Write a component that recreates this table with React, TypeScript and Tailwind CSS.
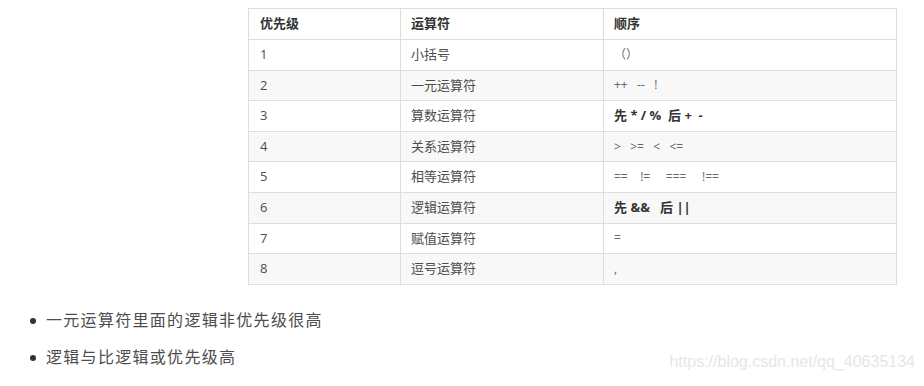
const rows: { level: string; name: string; order: string; bold?: boolean }[] = [
  { level: '1', name: '小括号', order: '（）' },
  { level: '2', name: '一元运算符', order: '++   --   !' },
  { level: '3', name: '算数运算符', order: '先 * / %  后 +  -', bold: true },
  { level: '4', name: '关系运算符', order: '>   >=   <   <=' },
  { level: '5', name: '相等运算符', order: '==    !=     ===     !==' },
  { level: '6', name: '逻辑运算符', order: '先 &&   后 ||', bold: true },
  { level: '7', name: '赋值运算符', order: '=' },
  { level: '8', name: '逗号运算符', order: ',' },
];

const font = { fontFamily: '"Open Sans", "Noto Sans CJK SC", sans-serif' };

const App = () => {
  return (
    <div className="w-[924px] h-[386px] bg-white overflow-hidden text-[#4d4d4d]" style={font}>
      <div className="pt-[8px] pl-[248px]">
        <table className="border-collapse text-[13px] w-[649px]">
          <thead>
            <tr className="h-[31px]">
              <th className="border border-[#dddddd] w-[152px] px-[11px] text-left font-bold text-[#333]">优先级</th>
              <th className="border border-[#dddddd] w-[203px] px-[10px] text-left font-bold text-[#333]">运算符</th>
              <th className="border border-[#dddddd] px-[10px] text-left font-bold text-[#333]">顺序</th>
            </tr>
          </thead>
          <tbody>
            {rows.map((r, i) => (
              <tr key={r.level} className={i % 2 === 1 ? 'h-[30.6px] bg-[#f8f8f8]' : 'h-[30.6px] bg-white'}>
                <td className="border border-[#dddddd] px-[11px]">{r.level}</td>
                <td className="border border-[#dddddd] px-[10px]">{r.name}</td>
                <td
                  className={
                    r.bold
                      ? 'border border-[#dddddd] px-[10px] whitespace-pre font-bold text-[#333]'
                      : 'border border-[#dddddd] px-[10px] whitespace-pre text-[12px] text-[#666]'
                  }
                >
                  {r.order}
                </td>
              </tr>
            ))}
          </tbody>
        </table>
      </div>
      <div className="relative">
        <ul className="pl-[46px] pt-[22px] text-[16px] tracking-[1.3px] text-[#4d4d4d]">
          <li className="relative h-[37px] leading-[26px]">
            <span className="absolute left-[-16px] top-[11px] w-[6px] h-[6px] rounded-full bg-[#333]" />
            一元运算符里面的逻辑非优先级很高
          </li>
          <li className="relative h-[26px] leading-[26px]">
            <span className="absolute left-[-16px] top-[11px] w-[6px] h-[6px] rounded-full bg-[#333]" />
            逻辑与比逻辑或优先级高
          </li>
        </ul>
        <div
          className="absolute right-[9px] top-[68px] text-[16px] leading-[18px] text-[#e6e6e6]"
          style={{ fontFamily: '"Liberation Sans", Arial, sans-serif' }}
        >
          https://blog.csdn.net/qq_40635134
        </div>
      </div>
    </div>
  );
};

export default App;
